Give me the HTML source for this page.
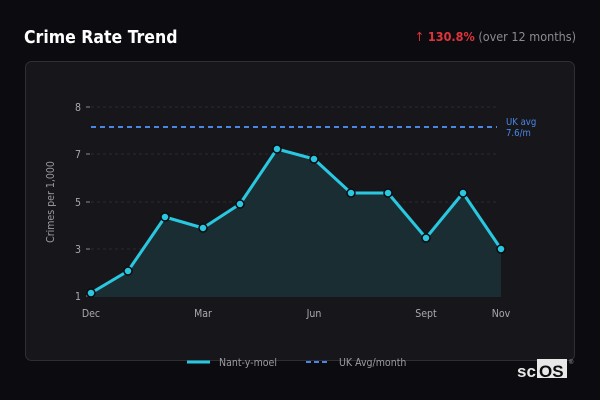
<!DOCTYPE html>
<html><head><meta charset="utf-8"><style>
html,body{margin:0;padding:0;background:#0c0c10;width:600px;height:400px;overflow:hidden;font-family:"DejaVu Sans","Liberation Sans",sans-serif;}
</style></head><body>
<svg width="600" height="400" xmlns="http://www.w3.org/2000/svg" style="position:absolute;left:0;top:0">
<rect x="0" y="0" width="600" height="400" fill="#0c0c10"/>
<text x="24" y="43" fill="#ffffff" font-size="17.5" font-weight="bold" font-family="DejaVu Sans Condensed, DejaVu Sans, sans-serif">Crime Rate Trend</text>
<text x="576" y="41" text-anchor="end" font-size="12.5" font-family="DejaVu Sans Condensed, DejaVu Sans, sans-serif"><tspan fill="#e0343c">↑ </tspan><tspan fill="#e0343c" font-weight="bold">130.8%</tspan><tspan fill="#8a8a90"> (over 12 months)</tspan></text>
<rect x="25.5" y="61.5" width="549" height="299" rx="6" fill="#17171b" stroke="#2e2e33"/>
<g stroke="#2a2a2f" stroke-dasharray="3,3" stroke-width="1">
<line x1="91" y1="107" x2="497" y2="107"/>
<line x1="91" y1="154" x2="497" y2="154"/>
<line x1="91" y1="202" x2="497" y2="202"/>
<line x1="91" y1="249" x2="497" y2="249"/>
</g>
<g stroke="#8a8a90" stroke-width="1">
<line x1="86" y1="107" x2="90" y2="107"/><line x1="86" y1="154" x2="90" y2="154"/><line x1="86" y1="202" x2="90" y2="202"/><line x1="86" y1="249" x2="90" y2="249"/><line x1="86" y1="296" x2="90" y2="296"/>
</g>
<g fill="#a8a8ae" font-size="10.5" text-anchor="end" font-family="DejaVu Sans Condensed, DejaVu Sans, sans-serif">
<text x="81" y="111">8</text><text x="81" y="158">7</text><text x="81" y="206">5</text><text x="81" y="253">3</text><text x="81" y="300">1</text>
</g>
<text transform="translate(54,202) rotate(-90)" fill="#9a9aa0" font-size="10.5" text-anchor="middle" font-family="DejaVu Sans Condensed, DejaVu Sans, sans-serif">Crimes per 1,000</text>
<g fill="#a8a8ae" font-size="10.5" text-anchor="middle" font-family="DejaVu Sans Condensed, DejaVu Sans, sans-serif">
<text x="91" y="317">Dec</text><text x="203" y="317">Mar</text><text x="314" y="317">Jun</text><text x="426" y="317">Sept</text><text x="501" y="317">Nov</text>
</g>
<line x1="91" y1="127" x2="497" y2="127" stroke="#4a86e8" stroke-width="2" stroke-dasharray="5,4"/>
<text x="506" y="125" fill="#4a86e8" font-size="9.5" font-family="DejaVu Sans Condensed, DejaVu Sans, sans-serif">UK avg</text>
<text x="506" y="136" fill="#4a86e8" font-size="9.5" font-family="DejaVu Sans Condensed, DejaVu Sans, sans-serif">7.6/m</text>
<polygon points="91,293 128,271 165,217 203,228 240,204 277,149 314,159 351,193 388,193 426,238 463,193 501,249 501,297 91,297" fill="#1a2d33"/>
<polyline points="91,293 128,271 165,217 203,228 240,204 277,149 314,159 351,193 388,193 426,238 463,193 501,249" fill="none" stroke="#2ac8e0" stroke-width="3" stroke-linejoin="round"/>
<g fill="#2ac8e0" stroke="#0c0c10" stroke-width="1.5">
<circle cx="91" cy="293" r="4"/><circle cx="128" cy="271" r="4"/><circle cx="165" cy="217" r="4"/><circle cx="203" cy="228" r="4"/><circle cx="240" cy="204" r="4"/><circle cx="277" cy="149" r="4"/><circle cx="314" cy="159" r="4"/><circle cx="351" cy="193" r="4"/><circle cx="388" cy="193" r="4"/><circle cx="426" cy="238" r="4"/><circle cx="463" cy="193" r="4"/><circle cx="501" cy="249" r="4"/>
</g>
<line x1="187" y1="362" x2="210" y2="362" stroke="#2ac8e0" stroke-width="3"/>
<text x="219" y="366" fill="#9a9aa0" font-size="10.5" font-family="DejaVu Sans Condensed, DejaVu Sans, sans-serif">Nant-y-moel</text>
<line x1="306" y1="362" x2="330" y2="362" stroke="#4a86e8" stroke-width="2" stroke-dasharray="5,3"/>
<text x="339" y="366" fill="#9a9aa0" font-size="10.5" font-family="DejaVu Sans Condensed, DejaVu Sans, sans-serif">UK Avg/month</text>
<text x="517" y="377" fill="#e8e8e8" font-size="17" font-weight="bold" font-family="Liberation Sans, sans-serif">sc</text>
<rect x="537" y="359" width="30" height="19" fill="#e8e8e8"/>
<text x="539" y="377" fill="#0c0c10" font-size="17" font-weight="bold" font-family="Liberation Sans, sans-serif">OS</text>
<text x="569" y="364" fill="#a0a0a6" font-size="6" font-family="Liberation Sans, sans-serif">®</text>
</svg>
</body></html>
